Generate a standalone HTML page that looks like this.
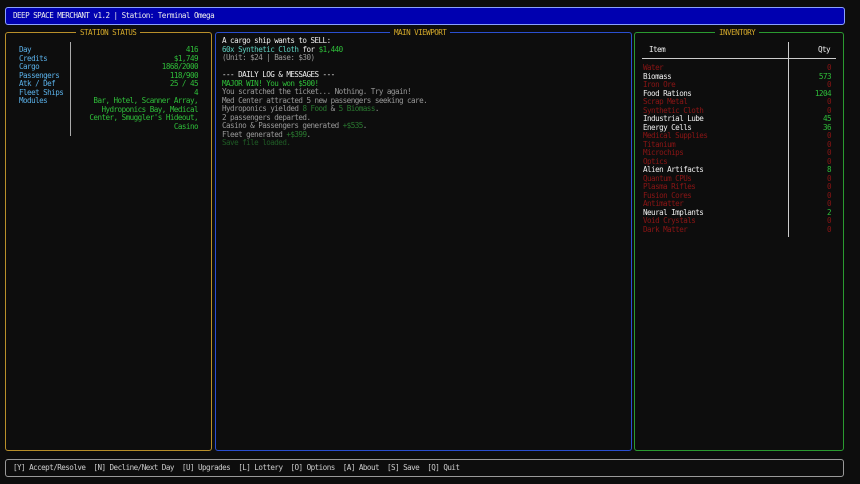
<!DOCTYPE html><html><head><style>
body{margin:0;width:860px;height:484px;background:#0d0d0d;font-family:"DejaVu Sans Mono","Liberation Mono",monospace;font-size:7.6px;letter-spacing:-0.55px;line-height:8.5px;overflow:hidden;position:relative;color:#ddd}
.a{position:absolute}
.box{position:absolute;border:1px solid;border-radius:3px;box-sizing:border-box}
.t{position:absolute;top:-5px;background:#0d0d0d;padding:0 4px;color:#d4a92a;line-height:9px}
.b{color:#5ab0e8}.g{color:#2fbf3a}.dg{color:#2a7a30}.gr{color:#999}.w{color:#eee}.r{color:#8b1515}
.row{display:flex;justify-content:space-between}
</style></head><body>
<div class="box" style="left:5px;top:7px;width:840px;height:18px;background:#0000b0;border-color:#8aa0ff;"><div class="a w" style="left:7px;top:4px">DEEP SPACE MERCHANT v1.2 | Station: Terminal Omega</div></div>

<div class="box" style="left:5px;top:32px;width:207px;height:419px;border-color:#b88f2a">
<div class="t" style="left:70px">STATION STATUS</div>
<div class="a b" style="left:13px;top:13px">Day<br>Credits<br>Cargo<br>Passengers<br>Atk / Def<br>Fleet Ships<br>Modules</div>
<div class="a" style="left:64px;top:9px;width:1px;height:94px;background:#aaa"></div>
<div class="a g" style="left:66px;top:13px;width:126px;text-align:right">416<br>$1,749<br>1868/2000<br>118/900<br>25 / 45<br>4<br>Bar, Hotel, Scanner Array, Hydroponics Bay, Medical Center, Smuggler's Hideout, Casino</div>
</div>

<div class="box" style="left:215px;top:32px;width:417px;height:419px;border-color:#2a4fd0">
<div class="t" style="left:174px">MAIN VIEWPORT</div>
<div class="a" style="left:6px;top:4px;white-space:pre"><span class="w">A cargo ship wants to SELL:</span>
<span style="color:#5fd0c0">60x Synthetic Cloth</span> <span class="w">for</span> <span class="g">$1,440</span>
<span class="gr">(Unit: $24 | Base: $30)</span>

<span class="w">--- DAILY LOG &amp; MESSAGES ---</span>
<span class="g">MAJOR WIN! You won $500!</span>
<span class="gr">You scratched the ticket... Nothing. Try again!
Med Center attracted 5 new passengers seeking care.
Hydroponics yielded <span class="dg">8 Food</span> &amp; <span class="dg">5 Biomass</span>.
2 passengers departed.
Casino &amp; Passengers generated <span class="dg">+$535</span>.
Fleet generated <span class="dg">+$399</span>.</span>
<span class="dg" style="color:#1f5a25">Save file loaded.</span></div>
</div>

<div class="box" style="left:634px;top:32px;width:210px;height:419px;border-color:#2a9a30">
<div class="t" style="left:80px">INVENTORY</div>
<div class="a w" style="left:14px;top:13px">Item</div><div class="a w" style="left:183px;top:13px">Qty</div>
<div class="a" style="left:7px;top:25px;width:194px;height:1px;background:#ccc"></div>
<div class="a" style="left:153px;top:9px;width:1px;height:195px;background:#ccc"></div>
<div class="a" style="left:8px;top:31px;width:188px">
<div class="row r"><span>Water</span><span>0</span></div>
<div class="row"><span class="w">Biomass</span><span class="g">573</span></div>
<div class="row r"><span>Iron Ore</span><span>0</span></div>
<div class="row"><span class="w">Food Rations</span><span class="g">1204</span></div>
<div class="row r"><span>Scrap Metal</span><span>0</span></div>
<div class="row r"><span>Synthetic Cloth</span><span>0</span></div>
<div class="row"><span class="w">Industrial Lube</span><span class="g">45</span></div>
<div class="row"><span class="w">Energy Cells</span><span class="g">36</span></div>
<div class="row r"><span>Medical Supplies</span><span>0</span></div>
<div class="row r"><span>Titanium</span><span>0</span></div>
<div class="row r"><span>Microchips</span><span>0</span></div>
<div class="row r"><span>Optics</span><span>0</span></div>
<div class="row"><span class="w">Alien Artifacts</span><span class="g">8</span></div>
<div class="row r"><span>Quantum CPUs</span><span>0</span></div>
<div class="row r"><span>Plasma Rifles</span><span>0</span></div>
<div class="row r"><span>Fusion Cores</span><span>0</span></div>
<div class="row r"><span>Antimatter</span><span>0</span></div>
<div class="row"><span class="w">Neural Implants</span><span class="g">2</span></div>
<div class="row r"><span>Void Crystals</span><span>0</span></div>
<div class="row r"><span>Dark Matter</span><span>0</span></div>
</div>
</div>

<div class="box" style="left:5px;top:459px;width:839px;height:18px;border-color:#999">
<div class="a" style="left:7px;top:4px;color:#ccc;white-space:pre">[Y] Accept/Resolve  [N] Decline/Next Day  [U] Upgrades  [L] Lottery  [O] Options  [A] About  [S] Save  [Q] Quit</div>
</div>
</body></html>
